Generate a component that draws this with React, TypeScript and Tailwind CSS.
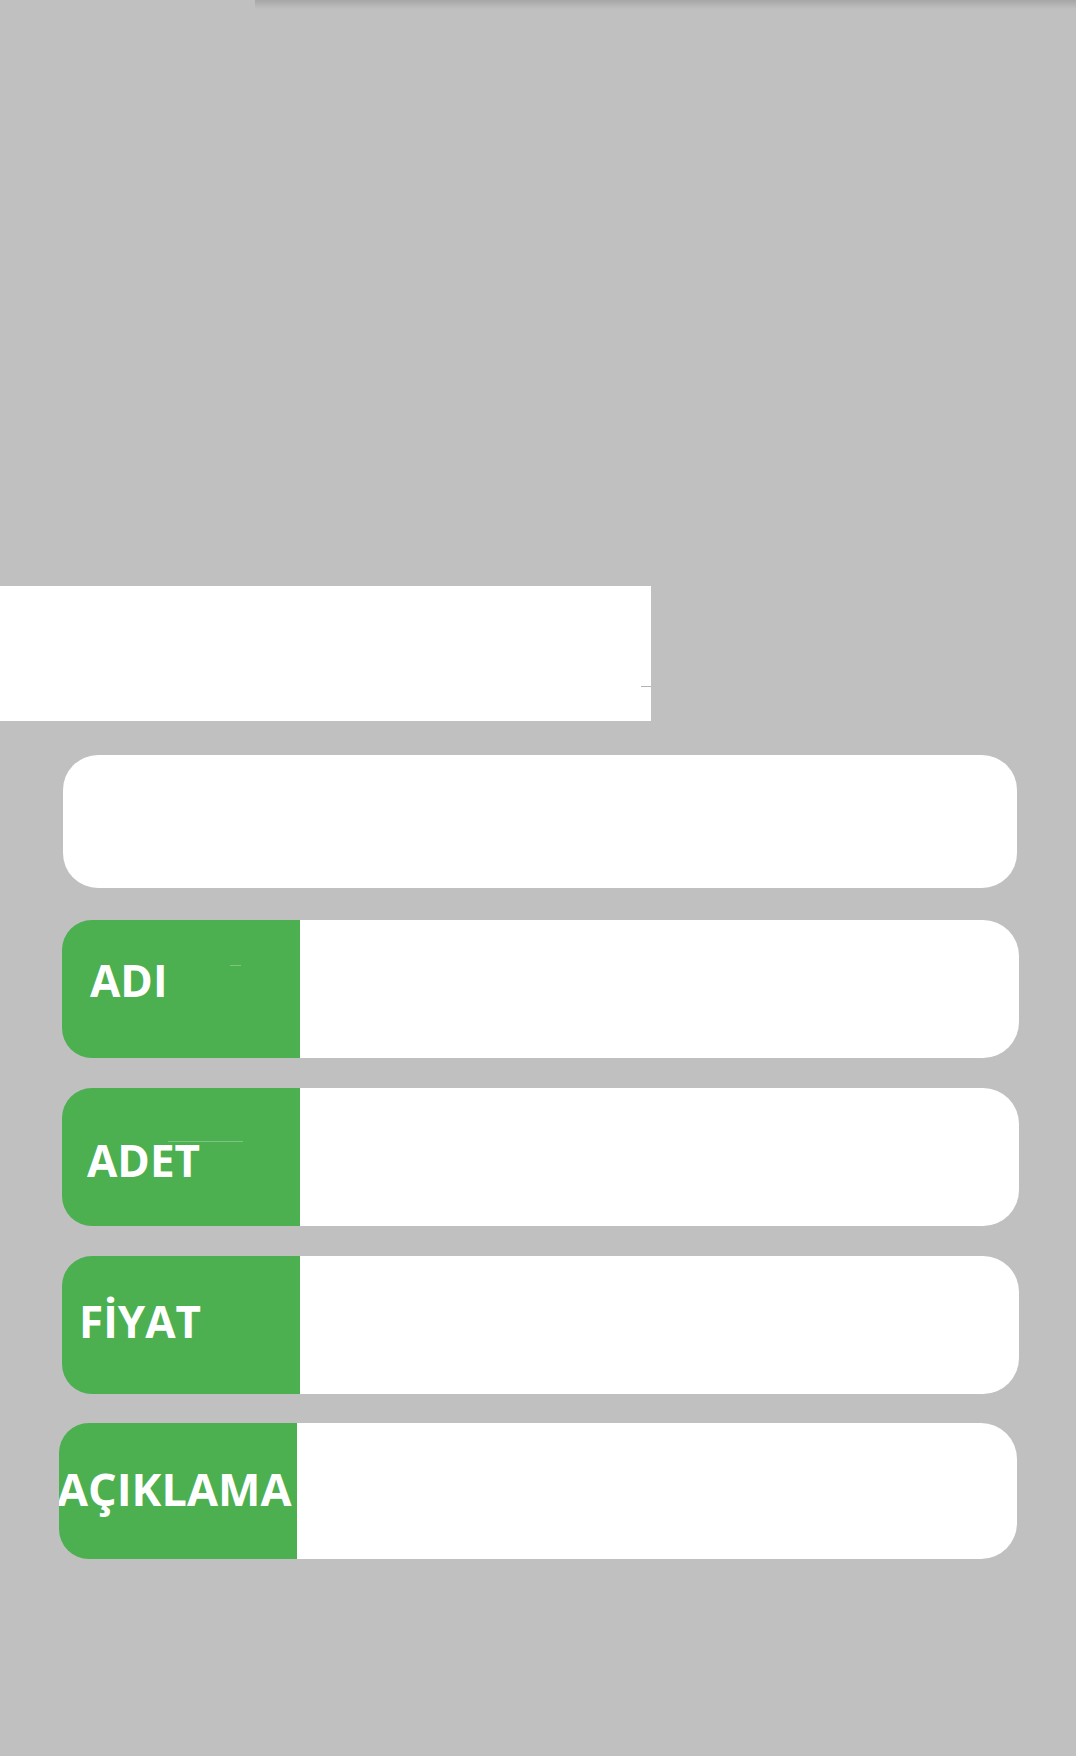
import React from 'react';

interface FieldRow {
  label: string;
  wrap: string;
  labelBox: string;
  text: string;
  mark?: string;
}

const rows: FieldRow[] = [
  {
    label: 'ADI',
    wrap: 'mt-[32px] ml-[62px] w-[957px] h-[138px]',
    labelBox: 'pl-[28px] pb-[18px]',
    text: 'text-[44px]',
    mark: 'left-[168px] top-[45px] w-[11px]',
  },
  {
    label: 'ADET',
    wrap: 'mt-[30px] ml-[62px] w-[957px] h-[138px]',
    labelBox: 'pl-[25px] pt-[5px]',
    text: 'text-[44px]',
    mark: 'left-[106px] top-[53px] w-[75px]',
  },
  {
    label: 'FİYAT',
    wrap: 'mt-[30px] ml-[62px] w-[957px] h-[138px]',
    labelBox: 'pl-[17px] pb-[9px]',
    text: 'text-[44px]',
  },
  {
    label: 'AÇIKLAMA',
    wrap: 'mt-[29px] ml-[59px] w-[958px] h-[136px]',
    labelBox: 'pl-0 pb-[6px]',
    text: 'text-[45px] -ml-[2px]',
  },
];

function Row({ row }: { row: FieldRow }) {
  return (
    <div className={`flex shrink-0 ${row.wrap}`}>
      {/* green label */}
      <div
        className={`relative flex items-center w-[238px] h-full shrink-0 overflow-hidden bg-[#4caf50] rounded-l-[30px] ${row.labelBox}`}
      >
        <span
          className={`whitespace-nowrap text-white font-bold leading-none ${row.text}`}
          style={{ fontFamily: '"Open Sans", "Liberation Sans", sans-serif' }}
        >
          {row.label}
        </span>
        {row.mark && (
          <div className={`absolute h-px bg-[#7cc47f] ${row.mark}`}></div>
        )}
      </div>
      {/* value field */}
      <div className="flex-1 h-full bg-white rounded-r-[36px]"></div>
    </div>
  );
}

export default function App() {
  return (
    <div className="w-[1076px] h-[1756px] bg-[#c0c0c0] flex flex-col overflow-hidden">
      {/* top shadow bar */}
      <div className="ml-[255px] h-[9px] shrink-0 bg-gradient-to-b from-[#a6a6a6] to-[#c0c0c0]"></div>

      {/* blank white panel */}
      <div className="relative mt-[577px] w-[651px] h-[135px] shrink-0 bg-white">
        <div className="absolute right-0 top-[100px] w-[10px] h-px bg-[#b4b4b4]"></div>
      </div>

      {/* search / title field */}
      <div className="mt-[34px] ml-[63px] w-[954px] h-[133px] shrink-0 bg-white rounded-[35px]"></div>

      {rows.map((row) => (
        <Row key={row.label} row={row} />
      ))}
    </div>
  );
}
